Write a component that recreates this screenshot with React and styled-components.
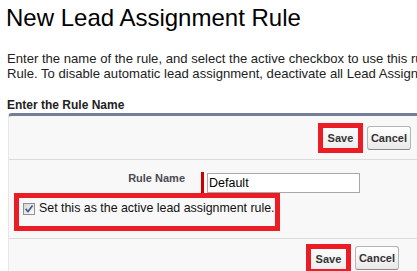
import React from "react";
import styled, { createGlobalStyle } from "styled-components";

const GlobalStyle = createGlobalStyle`
  html, body { margin: 0; padding: 0; background: #fff; }
  body {
    font-family: Arial, "Liberation Sans", sans-serif;
    width: 417px;
    height: 271px;
    overflow: hidden;
  }
`;

const Page = styled.div`
  padding-left: 7px;
  overflow: hidden;
  width: 410px;
  height: 271px;
`;

const Title = styled.h1`
  margin: 4px 0 0 -1px;
  font-size: 24px;
  line-height: 28px;
  font-weight: normal;
  color: #000;
  white-space: nowrap;
`;

const Intro = styled.p`
  margin: 19px 0 0 0;
  font-size: 13.1px;
  line-height: 15px;
  color: #222;
  white-space: nowrap;
`;

const SectionTitle = styled.h3`
  margin: 17px 0 0 0;
  font-size: 12px;
  line-height: 14px;
  font-weight: bold;
  color: #222;
  white-space: nowrap;
`;

const Panel = styled.div`
  margin: 1px -20px 0 1px;
  background: #f8f8f8;
  border: 1px solid #e6e6e6;
  border-top: 3px solid #747e96;
  border-radius: 4px 4px 0 0;
`;

const ButtonRow = styled.div`
  display: flex;
  justify-content: flex-end;
  align-items: ${(p) => (p.$bottom ? "flex-start" : "center")};
  gap: 4px;
  height: ${(p) => (p.$bottom ? "40px" : "43px")};
  padding: ${(p) => (p.$bottom ? "5px 37px 0 0" : "0 25px 0 0")};
  box-sizing: border-box;
  border-top: ${(p) => (p.$bottom ? "1px solid #dcdcdc" : "none")};
`;

const FormSection = styled.div`
  border-top: 1px solid #dcdcdc;
  padding: 12px 0 7px 0;
`;

const Highlight = styled.div`
  box-sizing: border-box;
  border: 5px solid #ec1c24;
  display: flex;
`;

const SaveHighlight = styled(Highlight)`
  width: 45px;
  height: 30px;
`;

const Button = styled.button`
  font-family: Arial, "Liberation Sans", sans-serif;
  font-size: 11px;
  font-weight: bold;
  color: #333;
  padding: 0 3px;
  margin: 0;
  height: 24px;
  background: linear-gradient(#ffffff, #e9e9e9);
  border: 1px solid #b5b5b5;
  border-bottom-color: #8a8a8a;
  border-radius: 3px;
  cursor: pointer;
  ${(p) => (p.$bottom ? "margin-top: 2px;" : "")}
`;

const InnerSave = styled(Button)`
  flex: 1;
  height: 20px;
  border: none;
  border-radius: 0;
  padding: 0;
  background: linear-gradient(#fbfbfb, #eeeeee);
  margin: 0;
`;

const FieldRow = styled.div`
  display: flex;
  align-items: flex-start;
  height: 21px;
`;

const Label = styled.label`
  width: 176px;
  padding-right: 16px;
  text-align: right;
  font-size: 11px;
  line-height: 13px;
  font-weight: bold;
  color: #4a4a56;
  white-space: nowrap;
`;

const RequiredBar = styled.span`
  width: 3px;
  height: 21px;
  background: #c00;
`;

const Input = styled.input`
  box-sizing: border-box;
  margin: 1px 0 0 3px;
  width: 153px;
  height: 20px;
  border: 1px solid #a8a8a8;
  padding: 0 1px;
  font-family: Arial, "Liberation Sans", sans-serif;
  font-size: 12.5px;
  color: #000;
  background: #fff;
  outline: none;
`;

const CheckHighlight = styled(Highlight)`
  margin-left: 5px;
  width: 266px;
  height: 38px;
  padding: 3px 0 0 4px;
  align-items: flex-start;
  gap: 4px;
`;

const CheckBox = styled.span`
  box-sizing: border-box;
  margin-top: 2px;
  width: 12px;
  height: 12px;
  border: 1px solid #8e8f8f;
  background: linear-gradient(135deg, #d6d6d6, #fbfbfb);
  display: flex;
  align-items: center;
  justify-content: center;
`;

const CheckLabel = styled.span`
  font-size: 12.4px;
  line-height: 14px;
  color: #111;
  white-space: nowrap;
`;

export default function App() {
  return (
    <>
      <GlobalStyle />
      <Page>
        <Title>New Lead Assignment Rule</Title>
        <Intro>
          Enter the name of the rule, and select the active checkbox to use this rule as the active Lead Assignment
          <br />
          Rule. To disable automatic lead assignment, deactivate all Lead Assignment Rules.
        </Intro>
        <SectionTitle>Enter the Rule Name</SectionTitle>
        <Panel>
          <ButtonRow>
            <SaveHighlight>
              <InnerSave>Save</InnerSave>
            </SaveHighlight>
            <Button>Cancel</Button>
          </ButtonRow>
          <FormSection>
            <FieldRow>
              <Label>Rule Name</Label>
              <RequiredBar />
              <Input defaultValue="Default" />
            </FieldRow>
            <CheckHighlight>
              <CheckBox>
                <svg width="10" height="10" viewBox="0 0 10 10">
                  <path d="M1.6 4.8 L4 7.6 L8.6 1.6" fill="none" stroke="#4a5d8f" strokeWidth="1.7" />
                </svg>
              </CheckBox>
              <CheckLabel>Set this as the active lead assignment rule.</CheckLabel>
            </CheckHighlight>
          </FormSection>
          <ButtonRow $bottom>
            <SaveHighlight>
              <InnerSave>Save</InnerSave>
            </SaveHighlight>
            <Button $bottom>Cancel</Button>
          </ButtonRow>
        </Panel>
      </Page>
    </>
  );
}
